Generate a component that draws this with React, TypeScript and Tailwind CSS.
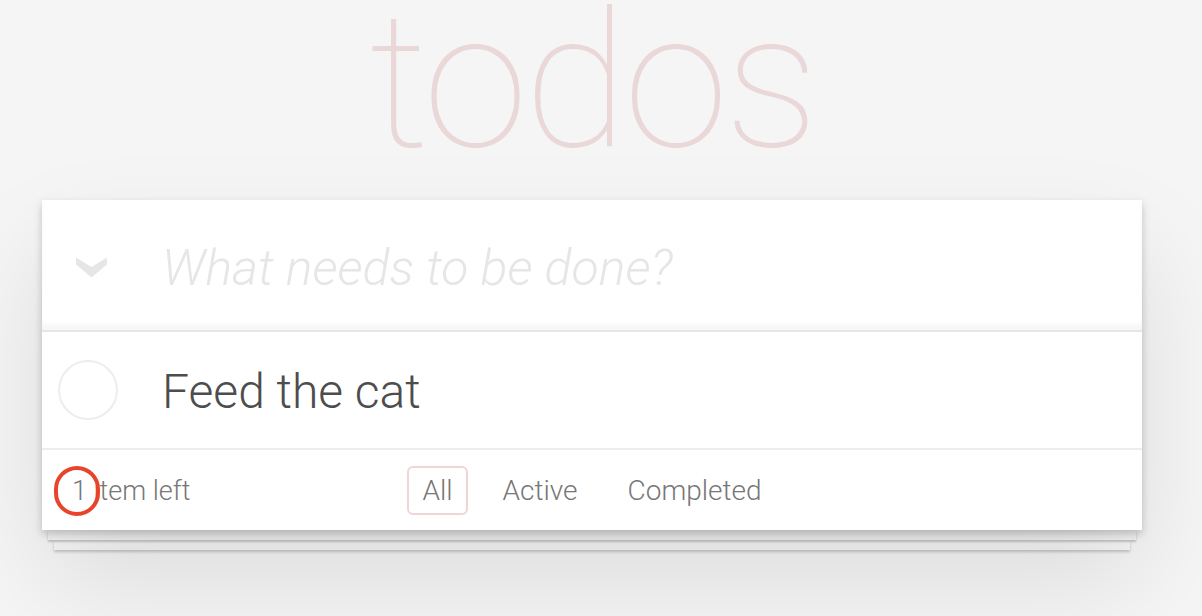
export default function App() {
  const filters = ['All', 'Active', 'Completed']

  return (
    <div className="min-h-screen bg-[#f5f5f5] font-['Roboto',sans-serif] font-light text-[#4d4d4d]">
      <div className="w-[1184px] flex flex-col items-center">
        <h1 className="h-[200px] leading-[162px] text-[190px] font-thin text-[rgba(175,47,47,0.15)] text-center tracking-[-4px]">
          todos
        </h1>

        <section className="relative z-10 w-[1100px] bg-white shadow-[0_4px_8px_0_rgba(0,0,0,0.2),0_50px_100px_0_rgba(0,0,0,0.1)]">
          <header className="h-[132px] flex items-center border-b-2 border-[#e6e6e6] shadow-[inset_0_-6px_3px_rgba(0,0,0,0.03)]">
            <div className="w-[120px] pl-[34px] pt-[4px] flex items-center">
              <svg width="31" height="21" viewBox="0 0 31 21">
                <polygon points="0,0.5 15.5,10 31,0.5 31,7.5 15.5,20.5 0,7.5" fill="#e6e6e6" />
              </svg>
            </div>
            <input
              className="flex-1 h-full pt-[6px] bg-transparent outline-none text-[50px] italic font-light placeholder:text-[#e6e6e6] placeholder:italic"
              placeholder="What needs to be done?"
            />
          </header>

          <div className="h-[116px] flex items-center">
            <div className="w-[120px] pl-[16px] flex items-center">
              <span className="w-[60px] h-[60px] rounded-full border-2 border-[#ededed]" />
            </div>
            <span className="text-[48px] leading-none pt-[4px]">Feed the cat</span>
          </div>

          <footer className="relative h-[82px] border-t-2 border-[#ededed] px-[30px] grid grid-cols-[1fr_auto_1fr] items-center text-[28px] text-[#777]">
            <span className="text-[27px] pt-[2px]">1 item left</span>
            <ul className="flex gap-[20px]">
              {filters.map((f) => (
                <li key={f}>
                  <a
                    className={
                      f === 'All'
                        ? 'block px-[13px] py-[6px] leading-[33px] border-2 rounded-[6px] border-[rgba(175,47,47,0.2)]'
                        : 'block px-[13px] py-[6px] leading-[33px] border-2 rounded-[6px] border-transparent'
                    }
                  >
                    {f}
                  </a>
                </li>
              ))}
            </ul>
            <span />
            <span className="absolute left-[12px] top-[16px] w-[46px] h-[50px] rounded-full border-[4px] border-[#e8442c]" />
          </footer>
        </section>

        <div className="w-[1088px] h-[10px] bg-[#f6f6f6] shadow-[0_2px_2px_rgba(0,0,0,0.2)] relative z-[5]" />
        <div className="w-[1076px] h-[10px] bg-[#f6f6f6] shadow-[0_2px_3px_rgba(0,0,0,0.2)]" />
      </div>
    </div>
  )
}
